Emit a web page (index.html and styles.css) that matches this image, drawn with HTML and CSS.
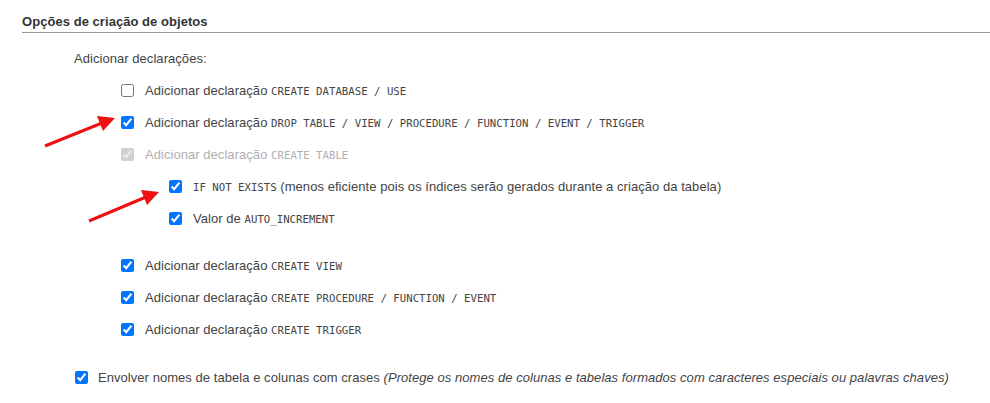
FILE: index.html
```html
<!DOCTYPE html>
<html lang="pt">
<head>
<meta charset="utf-8">
<title>Opções de criação de objetos</title>
<link rel="stylesheet" href="styles.css">
</head>
<body>
<div class="section">
  <h2 class="heading">Opções de criação de objetos</h2>
  <div class="intro">Adicionar declarações:</div>
  <div class="list">
    <label class="row"><input type="checkbox"><span>Adicionar declaração <code>CREATE DATABASE / USE</code></span></label>
    <label class="row"><input type="checkbox" checked><span>Adicionar declaração <code>DROP TABLE / VIEW / PROCEDURE / FUNCTION / EVENT / TRIGGER</code></span></label>
    <label class="row disabled"><input type="checkbox" checked disabled><span>Adicionar declaração <code>CREATE TABLE</code></span></label>
    <div class="sublist">
      <label class="row"><input type="checkbox" checked><span><code>IF NOT EXISTS</code> (menos eficiente pois os índices serão gerados durante a criação da tabela)</span></label>
      <label class="row"><input type="checkbox" checked><span>Valor de <code>AUTO_INCREMENT</code></span></label>
    </div>
    <div class="group">
      <label class="row"><input type="checkbox" checked><span>Adicionar declaração <code>CREATE VIEW</code></span></label>
      <label class="row"><input type="checkbox" checked><span>Adicionar declaração <code>CREATE PROCEDURE / FUNCTION / EVENT</code></span></label>
      <label class="row"><input type="checkbox" checked><span>Adicionar declaração <code>CREATE TRIGGER</code></span></label>
    </div>
  </div>
  <label class="row outer"><input type="checkbox" checked><span>Envolver nomes de tabela e colunas com crases <em>(Protege os nomes de colunas e tabelas formados com caracteres especiais ou palavras chaves)</em></span></label>
</div>
<svg class="arrows" width="990" height="403" viewBox="0 0 990 403" aria-hidden="true">
  <line x1="45" y1="146" x2="102" y2="123" stroke="#ee1111" stroke-width="3"/>
  <polygon points="115,118 97,116 103,131" fill="#ee1111"/>
  <line x1="89" y1="221" x2="146" y2="197" stroke="#ee1111" stroke-width="3"/>
  <polygon points="159,192 141,190 147,205" fill="#ee1111"/>
</svg>
</body>
</html>
```
FILE: styles.css
```css
html, body {
  margin: 0;
  padding: 0;
  background: #fff;
}
body {
  font-family: "Liberation Sans", Arial, sans-serif;
  font-size: 13px;
  letter-spacing: 0.05px;
  color: #444;
  position: relative;
  width: 990px;
  height: 403px;
  overflow: hidden;
}
.section {
  padding: 13px 0 0 22px;
}
.heading {
  margin: 0;
  font-size: 13px;
  font-weight: bold;
  color: #333;
  line-height: 18px;
  border-bottom: 1px solid #999;
  padding-bottom: 1px;
}
.intro {
  margin-top: 9px;
  padding-left: 52px;
  height: 32px;
  display: flex;
  align-items: center;
}
.list {
  padding-left: 99px;
}
.sublist {
  padding-left: 48px;
}
.group {
  margin-top: 15px;
}
.row {
  display: flex;
  align-items: center;
  gap: 10px;
  height: 32px;
  white-space: nowrap;
}
.row input {
  margin: 0;
  width: 13px;
  height: 13px;
  flex: none;
}
.list > .row, .group > .row {
  gap: 11px;
}
.sublist .row {
  gap: 11px;
}
.row.disabled {
  color: #b0b0b0;
}
.outer {
  margin-top: 16px;
  padding-left: 53px;
}
code {
  font-family: "DejaVu Sans Mono", "Liberation Mono", monospace;
  font-size: 10.7px;
  letter-spacing: 0;
}
em {
  font-style: italic;
}
.arrows {
  position: absolute;
  left: 0;
  top: 0;
  pointer-events: none;
}
```
